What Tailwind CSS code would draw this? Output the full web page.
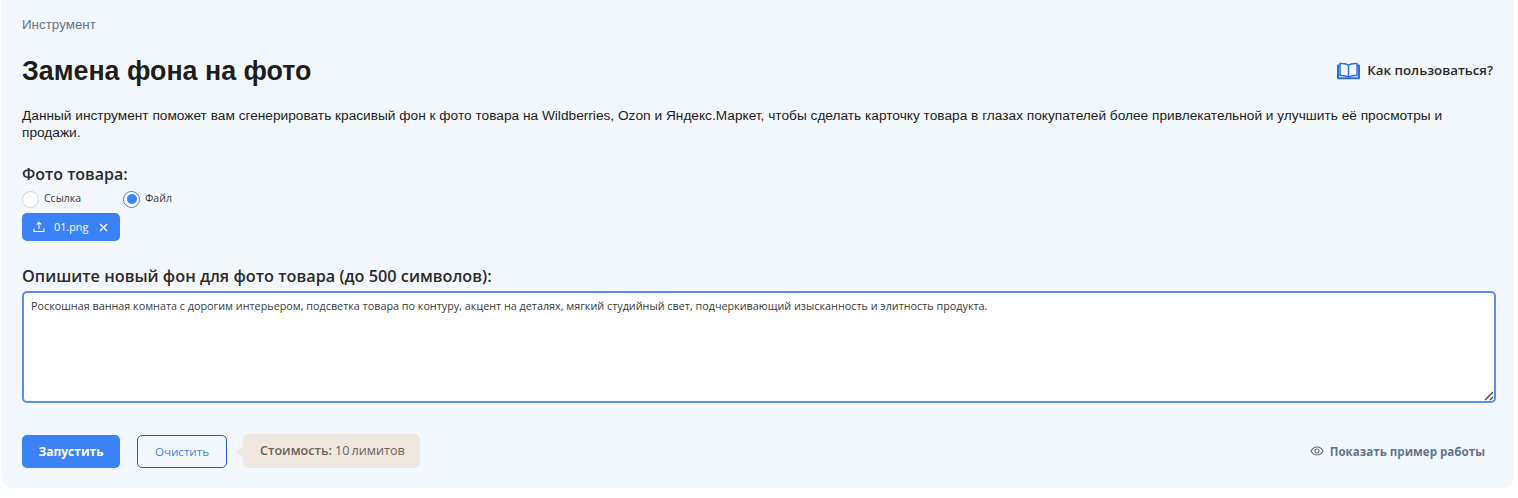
<!DOCTYPE html>
<html lang="ru">
<head>
    <meta charset="UTF-8">
    <title>Замена фона на фото</title>
    <script src="https://cdn.jsdelivr.net/npm/@tailwindcss/browser@4"></script>
</head>
<body class="bg-white font-['Open_Sans',sans-serif] overflow-hidden">
    <main class="ml-[2px] mr-[4px] h-[488px] bg-[#f3f8ff] rounded-b-[10px] pl-5 pr-[18px] pt-[17px]">
        <div class="font-['Liberation_Sans',sans-serif] text-[13.4px] leading-[15px] text-[#64748b]">Инструмент</div>

        <!-- Title -->
        <div class="flex items-center justify-between mt-[19px] h-[40px]">
            <h1 class="font-['Liberation_Sans',sans-serif] text-[26.8px] font-bold leading-[40px] text-[#1d1d1b]">Замена фона на фото</h1>
            <a href="#" class="flex items-center gap-[7px] text-[13.3px] font-semibold text-[#2b2b2b] mr-[3px]">
                <svg class="w-[23px] h-[18px]" viewBox="0 0 23 18" fill="none" stroke="#2f6fe4" stroke-width="1.5" stroke-linejoin="round">
                    <path d="M11.5 3.2C9.5 1.6 6.5 1.2 3 1.5V13.6C6.5 13.3 9.5 13.8 11.5 15.2C13.5 13.8 16.5 13.3 20 13.6V1.5C16.5 1.2 13.5 1.6 11.5 3.2Z"/>
                    <path d="M11.5 3.2V15.2"/>
                    <path d="M3 3.5H1V16.2H22V3.5H20" stroke-width="2"/>
                </svg>
                Как пользоваться?
            </a>
        </div>

        <p class="font-['Liberation_Sans',sans-serif] mt-[16px] text-[13.7px] leading-[17px] text-[#1d1d1b]">Данный инструмент поможет вам сгенерировать красивый фон к фото товара на Wildberries, Ozon и Яндекс.Маркет, чтобы сделать карточку товара в глазах покупателей более привлекательной и улучшить её просмотры и продажи.</p>

        <!-- Photo -->
        <div class="mt-[23px] text-[16px] leading-[20px] font-semibold text-[#2b2b2b]">Фото товара:</div>
        <div class="flex items-center mt-[5px] h-[20px] text-[10.5px] text-[#3a3a3a]">
            <label class="flex items-center w-[101px]">
                <span class="w-[17px] h-[17px] rounded-full bg-white border border-[#cbd5e1]"></span>
                <span class="ml-[5px]">Ссылка</span>
            </label>
            <label class="flex items-center">
                <span class="w-[17px] h-[17px] rounded-full bg-white border border-[#3b82f6] flex items-center justify-center">
                    <span class="w-[10px] h-[10px] rounded-full bg-[#3b82f6]"></span>
                </span>
                <span class="ml-[5px]">Файл</span>
            </label>
        </div>
        <div class="mt-[4px] w-[98px] h-[28px] rounded-[5px] bg-[#3b82f6] flex items-center pl-[11px] text-white text-[10.8px]">
            <svg class="w-[12px] h-[12px]" viewBox="0 0 12 12" fill="none" stroke="currentColor" stroke-width="1.1">
                <path d="M6 8V1.5M3.7 3.6L6 1.3L8.3 3.6M1 7.5V10.5H11V7.5"/>
            </svg>
            <span class="ml-[9px]">01.png</span>
            <svg class="w-[9px] h-[9px] ml-[11px]" viewBox="0 0 9 9" fill="none" stroke="currentColor" stroke-width="1.3">
                <path d="M1 1L8 8M8 1L1 8"/>
            </svg>
        </div>

        <!-- Description -->
        <div class="mt-[25px] text-[16.25px] leading-[20px] font-semibold text-[#2b2b2b]">Опишите новый фон для фото товара (до 500 символов):</div>
        <div class="relative mt-[5px]">
            <textarea class="block w-full h-[112px] resize-none bg-white border-2 border-[#5b8def] rounded-[5px] pl-[7px] pr-2 py-[5px] text-[10.8px] leading-[15px] text-[#3a3a3a] outline-none">Роскошная ванная комната с дорогим интерьером, подсветка товара по контуру, акцент на деталях, мягкий студийный свет, подчеркивающий изысканность и элитность продукта.</textarea>
            <svg class="absolute right-[2px] bottom-[2px] w-[10px] h-[10px]" viewBox="0 0 10 10" fill="none" stroke="#444" stroke-width="1.3">
                <path d="M1 9L9 1M6 9L9 6"/>
            </svg>
        </div>

        <!-- Actions -->
        <div class="flex items-center mt-[32px]">
            <button class="w-[98px] h-[33px] rounded-[5px] bg-[#3b82f6] text-white text-[12px] font-bold">Запустить</button>
            <button class="ml-[17px] w-[90px] h-[33px] rounded-[5px] border border-[#1d5fd0] text-[#3b82f6] text-[11.6px]">Очистить</button>
            <div class="relative ml-[16px] -mt-[1px] w-[177px] h-[34px] rounded-[5px] bg-[#efe8e1] flex items-center pl-[17px] text-[12.6px] text-[#6b6258]">
                <span class="absolute -left-[7px] top-[12px] w-0 h-0 border-y-[6px] border-y-transparent border-r-[7px] border-r-[#efe8e1]"></span>
                <span class="font-semibold mr-[3px]">Стоимость:</span>10&#8201;лимитов
            </div>
            <a href="#" class="ml-auto mr-[11px] flex items-center gap-[6px] text-[11.6px] font-bold text-[#64748b]">
                <svg class="w-[14px] h-[14px]" viewBox="0 0 14 14" fill="none" stroke="currentColor" stroke-width="1.1">
                    <path d="M1 7C2.3 4.5 4.4 3 7 3C9.6 3 11.7 4.5 13 7C11.7 9.5 9.6 11 7 11C4.4 11 2.3 9.5 1 7Z"/>
                    <circle cx="7" cy="7" r="2"/>
                </svg>
                Показать пример работы
            </a>
        </div>
    </main>
</body>
</html>
